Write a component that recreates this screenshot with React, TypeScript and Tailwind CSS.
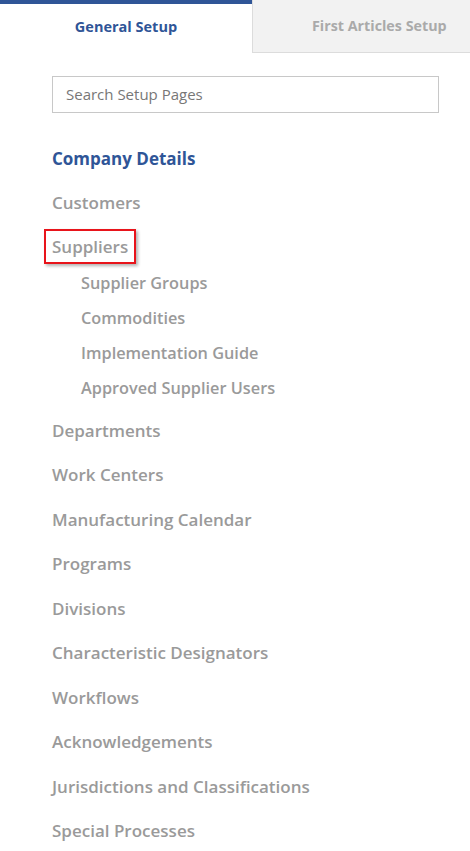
const subItems = ["Supplier Groups", "Commodities", "Implementation Guide", "Approved Supplier Users"];

const lowerItems = [
  "Departments",
  "Work Centers",
  "Manufacturing Calendar",
  "Programs",
  "Divisions",
  "Characteristic Designators",
  "Workflows",
  "Acknowledgements",
  "Jurisdictions and Classifications",
  "Special Processes",
];

export default function App() {
  return (
    <div className="h-[851px] w-[470px] overflow-hidden bg-white font-['Open_Sans',sans-serif]">
      {/* Tabs */}
      <div className="flex h-[53px]">
        <div className="flex w-[252px] items-center justify-center border-t-4 border-[#2f5597] pb-1 text-[14.5px] font-bold text-[#2f5597]">
          General Setup
        </div>
        <div className="flex flex-1 items-center border-b border-l border-[#dcdcdc] bg-[#f2f2f2] pl-[59px] text-[14.3px] font-bold text-[#aaaaaa]">
          First Articles Setup
        </div>
      </div>

      <div className="px-[52px] pt-[23px]">
        {/* Search */}
        <div className="flex h-[37px] w-[387px] items-center border border-[#c8c8c8] px-[13px] text-[15px] text-[#777777]">
          Search Setup Pages
        </div>

        {/* Nav */}
        <div className="mt-[33px] text-[17px] font-semibold text-[#9a9a9a]">
          <div className="flex h-[25px] items-center font-bold text-[#2f5597]">Company Details</div>
          <div className="mt-[19px] flex h-[25px] items-center">Customers</div>
          <div className="mt-[19px] flex h-[25px] items-center">
            <span className="-mx-[8px] border-2 border-[#e8141b] px-[6px] py-[3px] shadow-[2px_2px_3px_rgba(0,0,0,0.3)]">
              Suppliers
            </span>
          </div>
          <div className="mt-[7px] pl-[29px] text-[16.3px]">
            {subItems.map((s) => (
              <div key={s} className="flex h-[35px] items-center">
                {s}
              </div>
            ))}
          </div>
          <div className="mt-[2px]">
            {lowerItems.map((s) => (
              <div key={s} className="flex h-[44.5px] items-center">
                {s}
              </div>
            ))}
          </div>
        </div>
      </div>
    </div>
  );
}
